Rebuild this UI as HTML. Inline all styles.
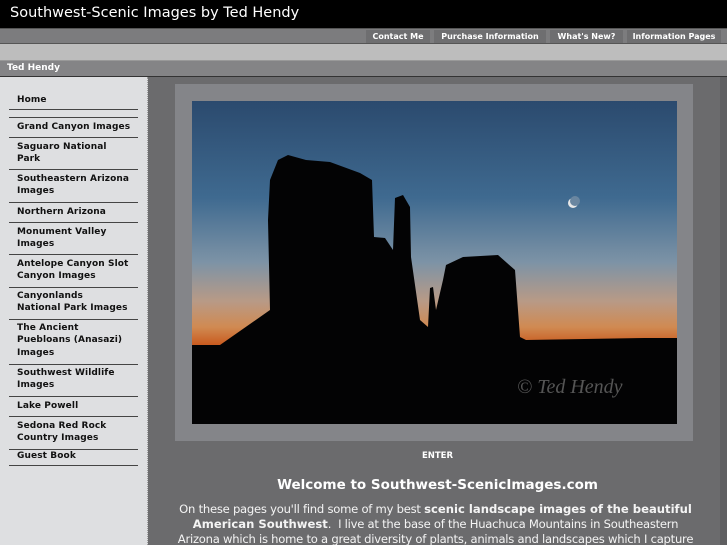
<!DOCTYPE html>
<html><head><style>
*{margin:0;padding:0;box-sizing:border-box}
html,body{width:727px;height:545px;overflow:hidden}
body{background:#6b6b6d;font-family:"DejaVu Sans","Liberation Sans",sans-serif;position:relative}
.a{position:absolute}
#hdr{left:0;top:0;width:727px;height:28px;background:#000;color:#fff;font-size:14.5px;padding:5px 0 0 10px;font-family:"DejaVu Sans",sans-serif}
#nav{left:0;top:28px;width:727px;height:16px;background:#7c7c7e;border-top:1px solid #555;border-bottom:1px solid #555}
.btn{top:1px;height:13px;background:#6e6e70;color:#fff;font-size:8px;font-weight:bold;text-align:center;line-height:13px}
#band{left:0;top:44px;width:727px;height:16px;background:#bdbdbd}
#th{left:0;top:60px;width:727px;height:17px;background:#848486;border-top:1px solid #999;border-bottom:1px solid #333;color:#fff;font-size:9px;font-weight:bold;padding:2px 0 0 7px}
#side{left:0;top:77px;width:148px;height:468px;background:#dedfe1;border-right:1px dotted #999}
.ln{left:9px;width:129px;height:1px;background:#444}
.it{left:17px;font-size:9px;font-weight:bold;color:#111;line-height:12.3px;letter-spacing:.1px}
#frame{left:175px;top:84px;width:518px;height:357px;background:#848589}
#pic{left:192px;top:101px}
.c{left:148px;width:579px;text-align:center;color:#fff}
</style></head><body>
<div id="hdr" class="a">Southwest-Scenic Images by Ted Hendy</div>
<div id="nav" class="a">
<div class="a btn" style="left:366px;width:64px">Contact Me</div>
<div class="a btn" style="left:434px;width:112px">Purchase Information</div>
<div class="a btn" style="left:550px;width:73px">What's New?</div>
<div class="a btn" style="left:627px;width:94px">Information Pages</div>
</div>
<div id="band" class="a"></div>
<div id="th" class="a">Ted Hendy</div>
<div id="side" class="a"></div>
<div class="a it" style="top:94px">Home</div>
<div class="a ln" style="top:109px"></div>
<div class="a ln" style="top:117px"></div>
<div class="a it" style="top:121px">Grand Canyon Images</div>
<div class="a ln" style="top:137px"></div>
<div class="a it" style="top:141px">Saguaro National<br>Park</div>
<div class="a ln" style="top:169px"></div>
<div class="a it" style="top:173px">Southeastern Arizona<br>Images</div>
<div class="a ln" style="top:202px"></div>
<div class="a it" style="top:206px">Northern Arizona</div>
<div class="a ln" style="top:222px"></div>
<div class="a it" style="top:226px">Monument Valley<br>Images</div>
<div class="a ln" style="top:254px"></div>
<div class="a it" style="top:258px">Antelope Canyon Slot<br>Canyon Images</div>
<div class="a ln" style="top:287px"></div>
<div class="a it" style="top:290px">Canyonlands<br>National Park Images</div>
<div class="a ln" style="top:319px"></div>
<div class="a it" style="top:322px">The Ancient<br>Puebloans (Anasazi)<br>Images</div>
<div class="a ln" style="top:364px"></div>
<div class="a it" style="top:367px">Southwest Wildlife<br>Images</div>
<div class="a ln" style="top:396px"></div>
<div class="a it" style="top:400px">Lake Powell</div>
<div class="a ln" style="top:416px"></div>
<div class="a it" style="top:420px">Sedona Red Rock<br>Country Images</div>
<div class="a ln" style="top:449px"></div>
<div class="a it" style="top:450px">Guest Book</div>
<div class="a ln" style="top:465px"></div>
<div style="left:720px;top:77px;width:7px;height:468px;background:#5f5f61" class="a"></div>
<div id="frame" class="a"></div>
<svg id="pic" class="a" width="485" height="323" viewBox="0 0 485 323">
<defs><linearGradient id="g" x1="0" y1="0" x2="0" y2="1">
<stop offset="0" stop-color="#2b4a6e"/><stop offset=".3" stop-color="#3f6a90"/><stop offset=".5" stop-color="#7d93a6"/><stop offset=".62" stop-color="#b89a86"/><stop offset=".7" stop-color="#d08a52"/><stop offset=".76" stop-color="#c8561a"/></linearGradient></defs>
<rect width="485" height="323" fill="url(#g)"/>
<path d="M0,244 L28,244 78,209 76,119 78,79 86,59 96,54 114,59 138,61 168,72 180,79 182,136 193,137 201,149 203,97 211,94 218,106 219,156 228,219 236,226 238,187 241,186 244,209 251,179 254,164 271,156 306,154 323,169 328,236 334,239 453,237 485,237 485,323 0,323Z" fill="#030304"/>
<circle cx="381" cy="102" r="5" fill="#e8e8e8"/><circle cx="383" cy="100" r="5" fill="#6a86a0"/>
<text x="325" y="292" font-family="Liberation Serif,serif" font-style="italic" font-size="20" fill="#555">© Ted Hendy</text>
</svg>
<div class="a c" style="top:451px;font-size:8.5px;font-weight:bold">ENTER</div>
<div class="a c" style="top:477px;font-size:13.5px;font-weight:bold">Welcome to Southwest-ScenicImages.com</div>
<div class="a c" style="top:502px;font-size:11.6px;line-height:15px;padding:0 32px 0 28px;letter-spacing:-0.25px;font-family:'DejaVu Sans ExtraLight','DejaVu Sans',sans-serif;color:#f4f4f4">On these pages you'll find some of my best <b style="font-family:'DejaVu Sans',sans-serif;letter-spacing:0">scenic landscape images of the beautiful American Southwest</b>.&nbsp; I live at the base of the Huachuca Mountains in Southeastern Arizona which is home to a great diversity of plants, animals and landscapes which I capture</div>
</body></html>
